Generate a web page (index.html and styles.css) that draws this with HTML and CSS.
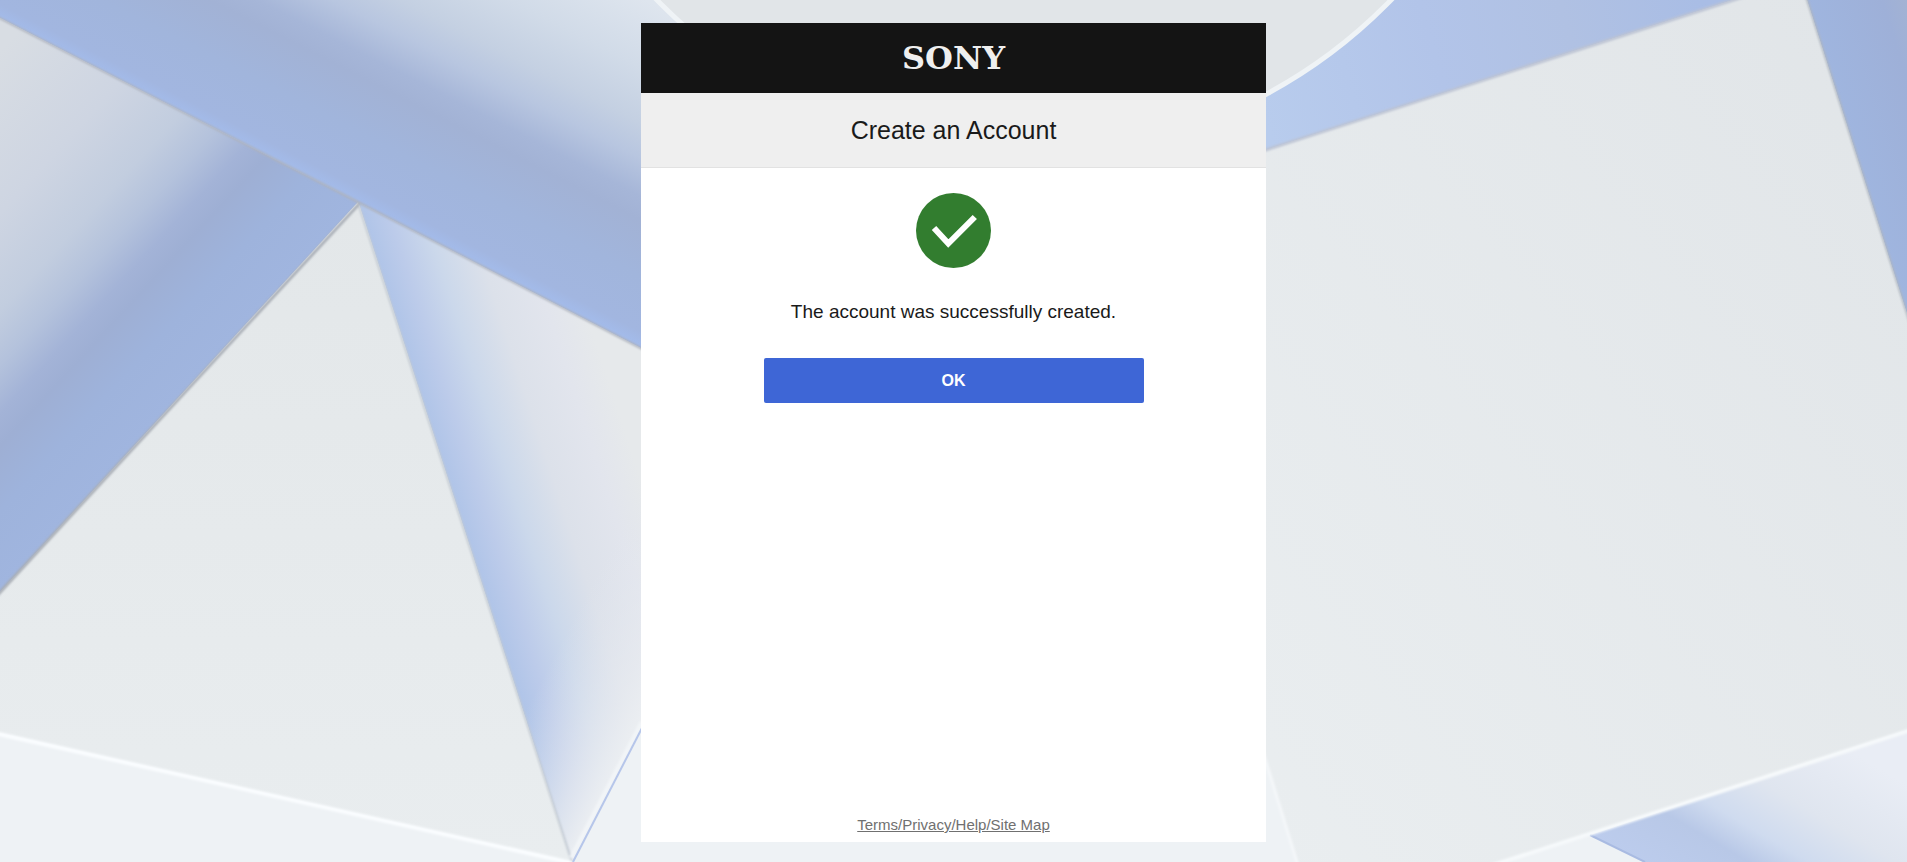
FILE: index.html
```html
<!DOCTYPE html>
<html lang="en">
	<head>
		<meta charset="utf-8">
		<title>Create an Account</title>
		<link rel="stylesheet" href="styles.css">
	</head>
	<body>
		<svg class="backdrop" viewBox="0 0 1907 862" preserveAspectRatio="xMidYMid slice" aria-hidden="true">
			<defs>
				<linearGradient id="band" gradientUnits="userSpaceOnUse" x1="358" y1="201" x2="499" y2="-75">
					<stop offset="0" stop-color="#a3bbea"/>
					<stop offset=".04" stop-color="#a2b6e0"/>
					<stop offset=".2" stop-color="#a1b5dc"/>
					<stop offset=".36" stop-color="#a2b2d5"/>
					<stop offset=".43" stop-color="#a6b6d8"/>
					<stop offset=".54" stop-color="#b8c6e0"/>
					<stop offset=".64" stop-color="#c4d0e2"/>
					<stop offset=".8" stop-color="#d1dbe8"/>
					<stop offset="1" stop-color="#dee5ee"/>
				</linearGradient>
				<linearGradient id="left" gradientUnits="userSpaceOnUse" x1="358" y1="203" x2="88" y2="-45">
					<stop offset="0" stop-color="#a0b5df"/>
					<stop offset=".15" stop-color="#9eb3dc"/>
					<stop offset=".27" stop-color="#9eafd4"/>
					<stop offset=".33" stop-color="#a3b3d7"/>
					<stop offset=".42" stop-color="#b4c2dc"/>
					<stop offset=".52" stop-color="#c2cddf"/>
					<stop offset=".7" stop-color="#ced5e2"/>
					<stop offset="1" stop-color="#d8dde3"/>
				</linearGradient>
				<linearGradient id="fold" gradientUnits="userSpaceOnUse" x1="465" y1="533" x2="640" y2="476">
					<stop offset="0" stop-color="#afc4e8"/>
					<stop offset=".14" stop-color="#bccbea"/>
					<stop offset=".32" stop-color="#cbd8eb"/>
					<stop offset=".55" stop-color="#dce1ea"/>
					<stop offset=".8" stop-color="#e2e5ed"/>
					<stop offset="1" stop-color="#e6e9eb"/>
				</linearGradient>
				<linearGradient id="foldLight" gradientUnits="userSpaceOnUse" x1="606" y1="795" x2="508" y2="744">
					<stop offset="0" stop-color="#eceff2"/>
					<stop offset=".3" stop-color="#e8ebf0" stop-opacity=".75"/>
					<stop offset="1" stop-color="#e3e7ef" stop-opacity="0"/>
				</linearGradient>
				<linearGradient id="paper" x1="0" y1="0" x2="0" y2="1">
					<stop offset="0" stop-color="#e3e7e9"/>
					<stop offset="1" stop-color="#e9edef"/>
				</linearGradient>
				<linearGradient id="sheet" x1="1" y1="0" x2="0" y2="1">
					<stop offset="0" stop-color="#e1e5e8"/>
					<stop offset="1" stop-color="#eaeef0"/>
				</linearGradient>
				<linearGradient id="sky" gradientUnits="userSpaceOnUse" x1="1265" y1="120" x2="1700" y2="0">
					<stop offset="0" stop-color="#b8cced"/>
					<stop offset=".4" stop-color="#b2c4e9"/>
					<stop offset=".7" stop-color="#b0c1e3"/>
					<stop offset="1" stop-color="#a9bde5"/>
				</linearGradient>
				<linearGradient id="edge" gradientUnits="userSpaceOnUse" x1="1807" y1="0" x2="1912" y2="-33">
					<stop offset="0" stop-color="#9fb5df"/>
					<stop offset=".65" stop-color="#9eb0d8"/>
					<stop offset="1" stop-color="#a6b4d0"/>
				</linearGradient>
				<linearGradient id="corner" gradientUnits="userSpaceOnUse" x1="1615" y1="850" x2="1718" y2="674">
					<stop offset="0" stop-color="#bccced"/>
					<stop offset=".28" stop-color="#b8c8e7"/>
					<stop offset=".43" stop-color="#cfdbef"/>
					<stop offset=".65" stop-color="#dfe5ef"/>
					<stop offset="1" stop-color="#e9edf5"/>
				</linearGradient>
				<filter id="soft"><feGaussianBlur stdDeviation="1"/></filter>
			</defs>
			<rect width="1907" height="862" fill="#eef2f5"/>

			<!-- left side -->
			<path d="M0 0H800V430L0 18z" fill="url(#band)"/>
			<path d="M0 18 358 202 0 592z" fill="url(#left)"/>
			<path d="M358 202 572 862 660 693V358z" fill="url(#fold)"/>
			<path d="M358 202 572 862 660 693V358z" fill="url(#foldLight)"/>
			<path d="M359 204 572 862 0 733V592z" fill="url(#paper)"/>
			<g fill="none" filter="url(#soft)">
				<path d="M-10 13 358 202 660 358" stroke="#adb2bd" stroke-width="2"/>
				<path d="M-10 603 359 204" stroke="#a8adb5" stroke-width="3"/>
				<path d="M359 206 572 862" stroke="#c3cad2" stroke-width="2"/>
				<path d="M-10 732 572 863" stroke="#fafdff" stroke-width="4"/>
				<path d="M571 858 642 722" stroke="#f2f5f8" stroke-width="4"/>
			</g>
			<path d="M573 862 642 728" stroke="#b6c6ea" stroke-width="2"/>

			<!-- right side -->
			<path d="M1200 0H1733L1200 171z" fill="url(#sky)"/>
			<path d="M1807 0H1907V314z" fill="url(#edge)"/>
			<path d="M1590 835 1907 730V862H1645z" fill="url(#corner)"/>
			<path d="M1590 835 1645 862" stroke="#a9bbe2" stroke-width="2"/>
			<path d="M1200 171 1733 0H1807L1907 314V730L1500 862H1297L1245 694z" fill="url(#sheet)"/>
			<g fill="none" filter="url(#soft)">
				<path d="M1200 171 1749 -5" stroke="#bcc3d3" stroke-width="3"/>
				<path d="M1804 -10 1910 323" stroke="#afb6c0" stroke-width="2"/>
				<path d="M1490 866 1917 728" stroke="#f6f9fb" stroke-width="4"/>
				<path d="M1245 694 1300 872" stroke="#f4f7f9" stroke-width="3"/>
			</g>

			<circle cx="1024" cy="-357" r="512" fill="#e1e5e8" stroke="#eff3f6" stroke-width="5"/>
		</svg>

		<div class="card">
			<div class="brand">SONY</div>
			<h1 class="title">Create an Account</h1>
			<div class="content">
				<svg class="check" viewBox="0 0 75 75" aria-hidden="true">
					<circle cx="37.5" cy="37.5" r="37.5" fill="#327d2f"/>
					<path d="M18 35 32.3 50.5 58.8 24" fill="none" stroke="#fff" stroke-width="6"/>
				</svg>
				<p class="message">The account was successfully created.</p>
				<button type="button" class="ok-btn">OK</button>
			</div>
			<div class="footer">
				<a href="#">Terms/Privacy/Help/Site Map</a>
			</div>
		</div>
	</body>
</html>
```
FILE: styles.css
```css
*{
	box-sizing: border-box;
}
body{
	margin: 0;
	padding: 23px 0 20px;
	min-height: 100vh;
	display: flex;
	justify-content: center;
	font-family: Arial, "Liberation Sans", sans-serif;
	color: #1a1a1a;
	background: #eef2f5;
}
.backdrop{
	position: fixed;
	top: 0;
	left: 0;
	width: 100%;
	height: 100%;
	z-index: -1;
}
.card{
	display: flex;
	flex-direction: column;
	width: 100%;
	max-width: 625px;
	background: #fff;
}
.brand{
	display: flex;
	align-items: center;
	justify-content: center;
	height: 70px;
	background: #141414;
	color: #efefef;
	font-family: "DejaVu Serif", serif;
	font-size: 32px;
	font-weight: bold;
	line-height: 32px;
}
.title{
	margin: 0;
	padding: 22px 16px;
	border-bottom: 1px solid #e2e2e2;
	background: #efefef;
	font-size: 25px;
	font-weight: normal;
	line-height: 30px;
	text-align: center;
}
.content{
	flex: 1;
	display: flex;
	flex-direction: column;
	align-items: center;
	padding: 25px 16px;
}
.check{
	width: 75px;
	height: 75px;
}
.message{
	margin: 32px 0 34px;
	font-size: 19px;
	line-height: 24px;
	text-align: center;
}
.ok-btn{
	width: 100%;
	max-width: 380px;
	height: 45px;
	border: none;
	border-radius: 2px;
	background: #3e66d6;
	color: #fff;
	font-family: inherit;
	font-size: 16px;
	font-weight: bold;
	cursor: pointer;
}
.footer{
	padding-bottom: 8px;
	font-size: 15px;
	line-height: 18px;
	text-align: center;
}
.footer a{
	color: #707070;
}
```
